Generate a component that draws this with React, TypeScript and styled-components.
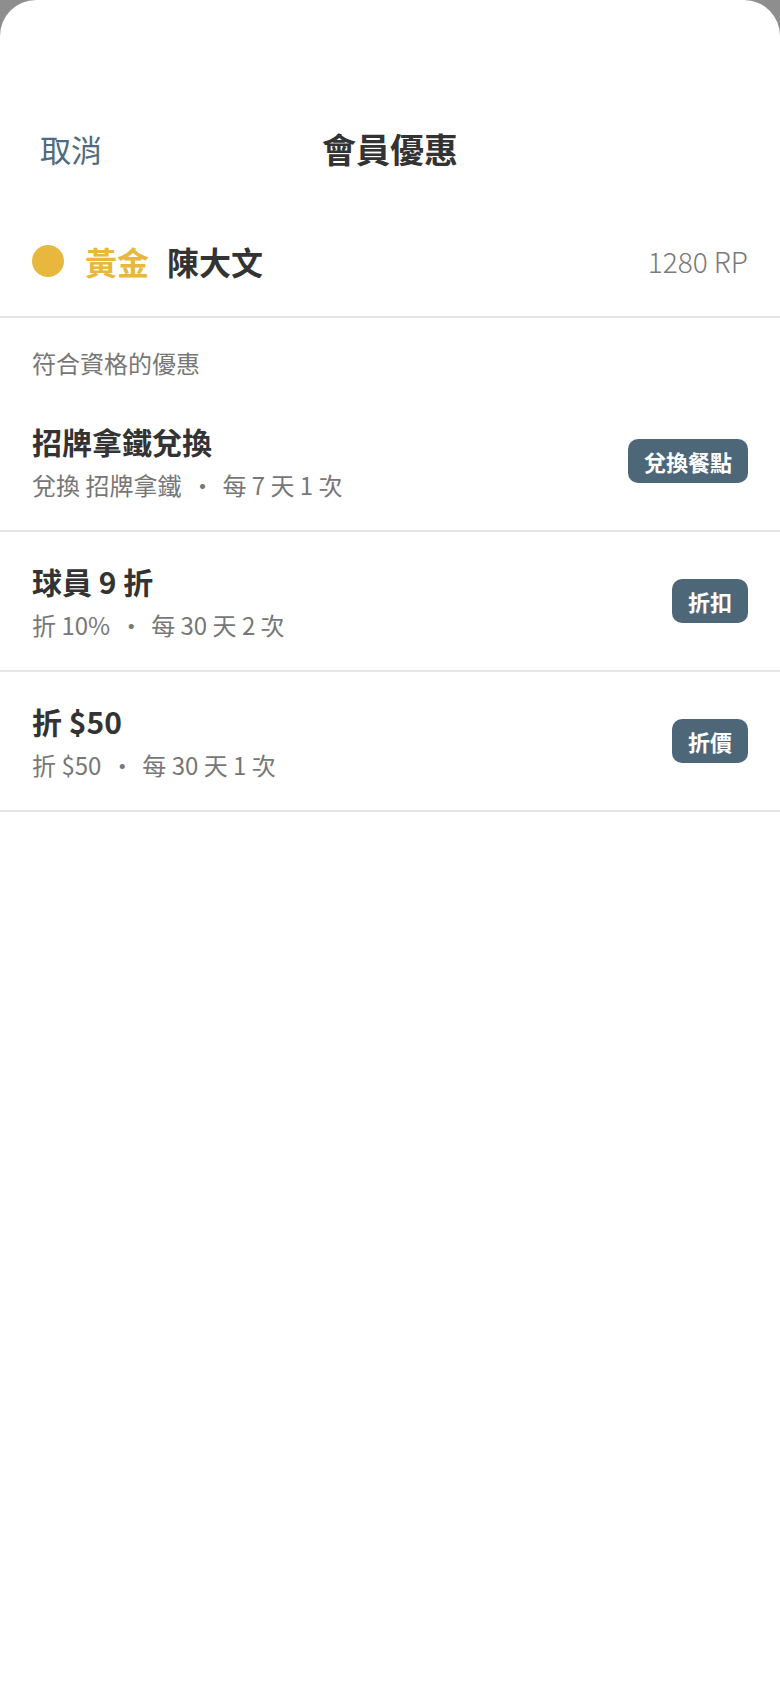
import React from 'react';
import styled, { createGlobalStyle } from 'styled-components';

interface Offer {
  id: number;
  title: string;
  detail: string;
  limit: string;
  tag: string;
}

const offers: Offer[] = [
  { id: 1, title: '招牌拿鐵兌換', detail: '兌換 招牌拿鐵', limit: '每 7 天 1 次', tag: '兌換餐點' },
  { id: 2, title: '球員 9 折', detail: '折 10%', limit: '每 30 天 2 次', tag: '折扣' },
  { id: 3, title: '折 $50', detail: '折 $50', limit: '每 30 天 1 次', tag: '折價' },
];

const GlobalStyle = createGlobalStyle`
  * {
    margin: 0;
    padding: 0;
    box-sizing: border-box;
  }
  html, body {
    background: #8e8e8e;
  }
  body {
    font-family: "Noto Sans CJK TC", "Noto Sans", sans-serif;
    color: #333333;
  }
`;

const Sheet = styled.div`
  min-height: 100vh;
  background: #ffffff;
  border-radius: 36px 36px 0 0;
  padding-top: 100px;
`;

const Header = styled.header`
  position: relative;
  height: 96px;
  display: flex;
  align-items: center;
  justify-content: center;
`;

const Cancel = styled.button`
  position: absolute;
  left: 40px;
  top: 50%;
  transform: translateY(-50%);
  border: none;
  background: none;
  font-family: inherit;
  font-size: 31px;
  color: #4e6b7f;
  cursor: pointer;
`;

const Title = styled.h1`
  font-size: 34px;
  font-weight: 700;
  color: #333333;
`;

const MemberRow = styled.div`
  display: flex;
  align-items: center;
  padding: 33px 32px 23px;
  height: 122px;
  border-bottom: 2px solid #e6e6e6;
`;

const Dot = styled.span<{ $color: string }>`
  width: 32px;
  height: 32px;
  border-radius: 50%;
  background: ${p => p.$color};
  flex-shrink: 0;
`;

const Tier = styled.span<{ $color: string }>`
  margin-left: 21px;
  font-size: 32px;
  font-weight: 700;
  color: ${p => p.$color};
`;

const Name = styled.span`
  margin-left: 18px;
  font-size: 32px;
  font-weight: 700;
  color: #333333;
`;

const Points = styled.span`
  margin-left: auto;
  font-size: 28px;
  font-weight: 300;
  color: #7a7a7a;
`;

const SectionLabel = styled.div`
  padding: 27px 32px 11px;
  font-size: 24px;
  line-height: 36px;
  color: #777777;
`;

const OfferRow = styled.div`
  display: flex;
  align-items: center;
  padding: 29px 32px 29px;
  border-bottom: 2px solid #e6e6e6;
`;

const OfferText = styled.div`
  display: flex;
  flex-direction: column;
  gap: 8px;
`;

const OfferTitle = styled.div`
  font-size: 30px;
  line-height: 40px;
  font-weight: 700;
  color: #333333;
`;

const OfferDetail = styled.div`
  font-size: 24px;
  line-height: 32px;
  color: #777777;
  white-space: pre;
`;

const Sep = styled.span`
  margin: 0 8px 0 9px;
`;

const Tag = styled.span`
  margin-left: auto;
  height: 44px;
  padding: 0 16px;
  border-radius: 10px;
  background: #4d6779;
  color: #ffffff;
  font-size: 22px;
  font-weight: 700;
  line-height: 44px;
`;

export default function App() {
  return (
    <>
      <GlobalStyle />
      <Sheet>
        <Header>
          <Cancel>取消</Cancel>
          <Title>會員優惠</Title>
        </Header>
        <MemberRow>
          <Dot $color="#e8b83e" />
          <Tier $color="#e8b83e">黃金</Tier>
          <Name>陳大文</Name>
          <Points>1280 RP</Points>
        </MemberRow>
        <SectionLabel>符合資格的優惠</SectionLabel>
        {offers.map(o => (
          <OfferRow key={o.id}>
            <OfferText>
              <OfferTitle>{o.title}</OfferTitle>
              <OfferDetail>
                {o.detail}
                <Sep>•</Sep>
                {o.limit}
              </OfferDetail>
            </OfferText>
            <Tag>{o.tag}</Tag>
          </OfferRow>
        ))}
      </Sheet>
    </>
  );
}
